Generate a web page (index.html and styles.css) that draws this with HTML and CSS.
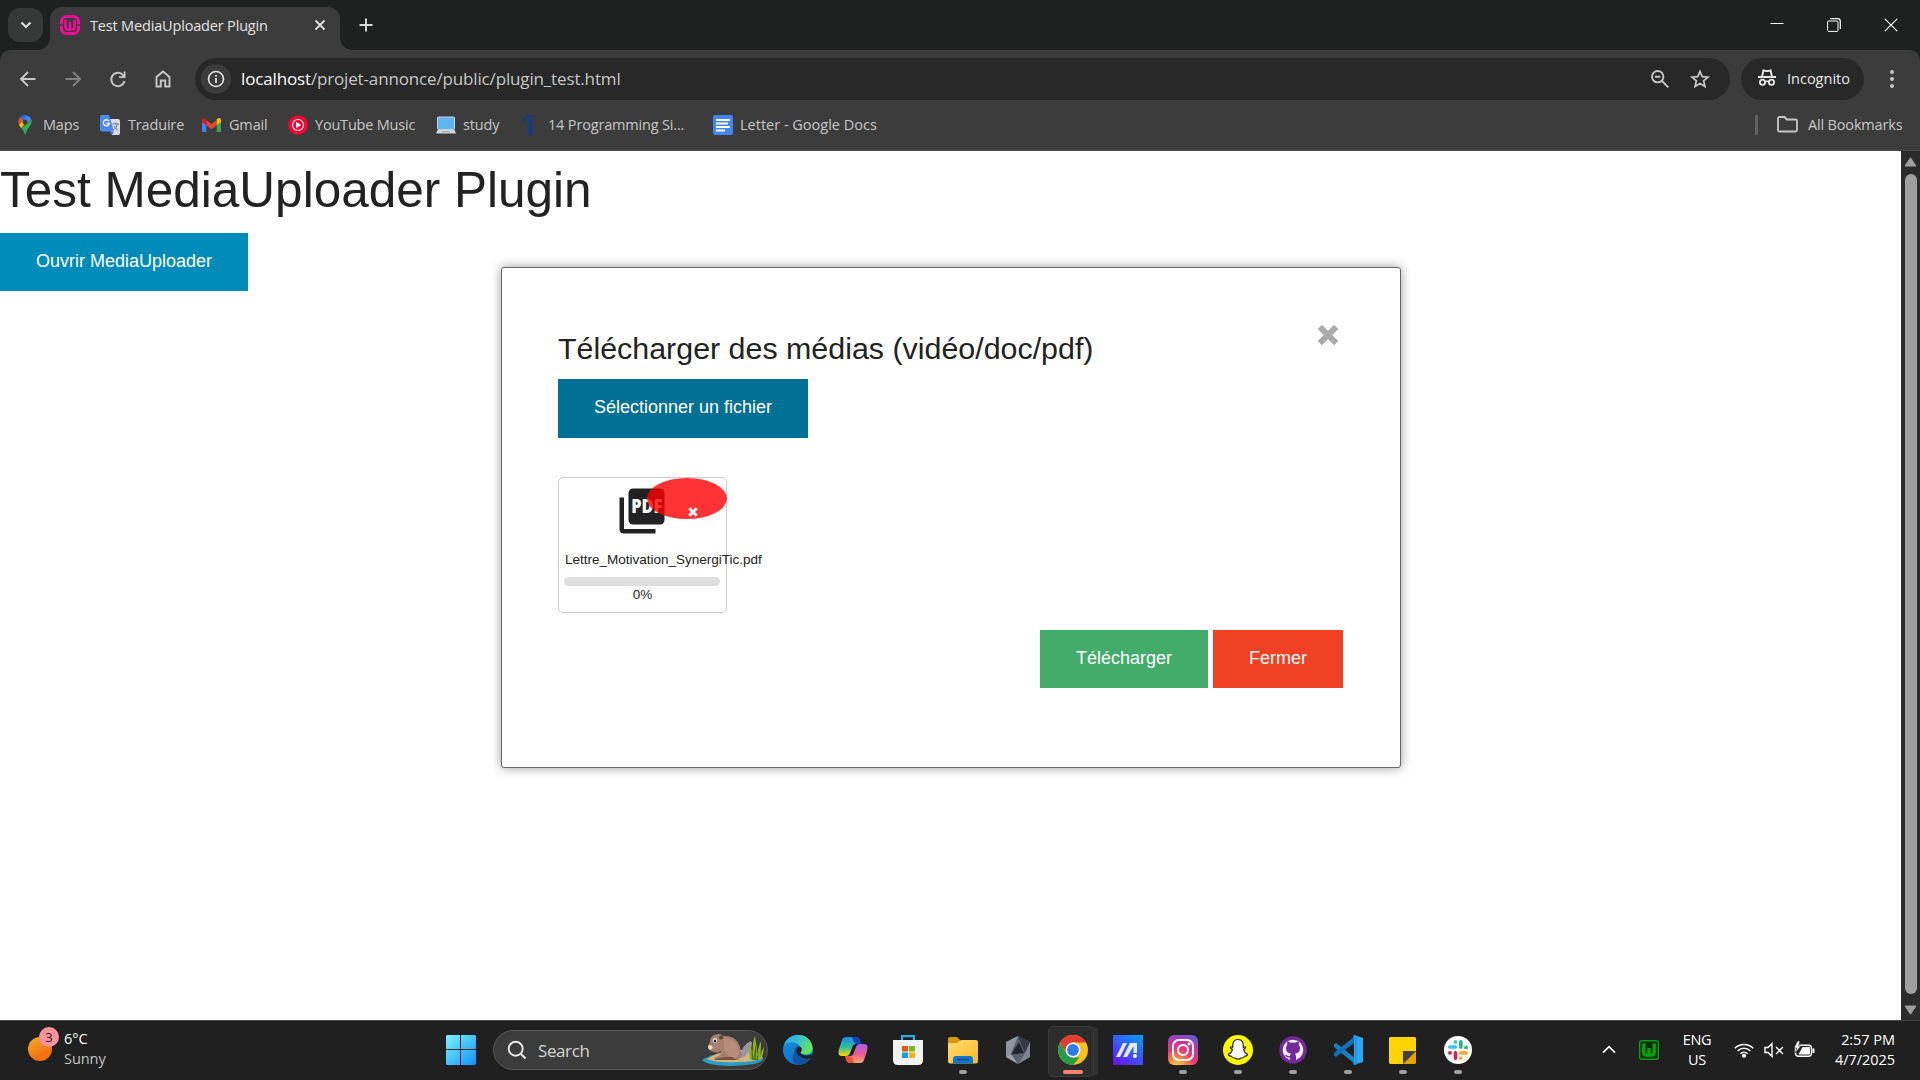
FILE: index.html
```html
<!DOCTYPE html>
<html lang="fr">
<head>
<meta charset="utf-8">
<title>Test MediaUploader Plugin</title>
<link rel="stylesheet" href="styles.css">
</head>
<body>
<div class="screen">
  <header class="tabstrip">
    <button class="tab-search"><svg width="12" height="12" viewBox="0 0 12 12"><path d="M1.5 3.5 6 8l4.500-4.500" fill="none" stroke="#e3e3e3" stroke-width="2"/></svg></button>
    <div class="tab">
      <svg class="favicon" width="20" height="20" viewBox="0 0 20 20"><rect x="1.500" y="1.500" width="17" height="17" rx="5" fill="none" stroke="#f70a9b" stroke-width="3"/><path d="M5.500 5v6.500q0 3 2.300 3h4.400q2.300 0 2.300-3V5M10 7v7" fill="none" stroke="#f70a9b" stroke-width="2.400"/><path d="M0 10h3M17 10h3" stroke="#3c3c3c" stroke-width="1.500"/></svg>
      <span class="tab-title">Test MediaUploader Plugin</span>
      <svg class="tab-close" width="12" height="12" viewBox="0 0 12 12"><path d="m1.500 1.500 9 9m0-9-9 9" stroke="#e3e3e3" stroke-width="1.800"/></svg>
    </div>
    <svg class="new-tab" width="14" height="14" viewBox="0 0 14 14"><path d="M7 .5v13M.5 7h13" stroke="#dcdcdc" stroke-width="1.900"/></svg>
    <div class="window-controls">
      <svg width="14" height="14" viewBox="0 0 14 14"><path d="M.5 5.500h13" stroke="#fff"/></svg>
      <svg width="14" height="14" viewBox="0 0 14 14" fill="none" stroke="#fff"><rect x=".6" y="3" width="10.400" height="10.400" rx="1"/><path d="M3 .7h7.500q2.800 0 2.800 2.800V11" stroke-width="1.200"/></svg>
      <svg width="14" height="14" viewBox="0 0 14 14"><path d="m.8.8 12.400 12.400m0-12.400L.8 13.200" stroke="#fff" stroke-width="1.200"/></svg>
    </div>
  </header>

  <section class="toolbar">
    <div class="nav-row">
      <div class="nav-icons">
        <svg width="20" height="20" viewBox="0 0 20 20"><path d="M17.500 10H3.500M10 3l-7 7 7 7" class="line"/></svg>
        <svg class="dim" width="20" height="20" viewBox="0 0 20 20"><path d="M2.500 10h14M10 3l7 7-7 7" class="line"/></svg>
        <svg width="20" height="20" viewBox="0 0 20 20"><path d="M16 7.500A6.700 6.700 0 1 0 16.500 12" class="line"/><path d="M17.500 2.500V9H11V7.200h4.700V2.500z" fill="#c7c7c7"/></svg>
        <svg width="20" height="20" viewBox="0 0 20 20"><path d="M3.500 17.500V8L10 2.500 16.500 8v9.500h-4.300v-6H7.800v6z" class="line"/></svg>
      </div>
      <div class="omnibox">
        <span class="site-info"><svg width="18" height="18" viewBox="0 0 18 18"><circle cx="9" cy="9" r="7.500" fill="none" stroke="#e3e3e3" stroke-width="1.600"/><path d="M9 8v5M9 5v1.700" stroke="#e3e3e3" stroke-width="1.800"/></svg></span>
        <span class="url"><b>localhost</b>/projet-annonce/public/plugin_test.html</span>
        <svg class="zoom-icon" width="20" height="20" viewBox="0 0 20 20" fill="none" stroke="#c7c7c7" stroke-width="1.900"><circle cx="7.700" cy="7.700" r="5.700"/><path d="m12 12 6.300 6.300M5 7.700h5.400"/></svg>
        <svg class="star-icon" width="20" height="20" viewBox="0 0 24 24"><path d="m12 3 2.700 6.200 6.800.6-5.100 4.500 1.500 6.600L12 17.400l-5.900 3.500 1.500-6.600-5.100-4.500 6.800-.6z" fill="none" stroke="#c7c7c7" stroke-width="2.100"/></svg>
      </div>
      <div class="incognito">
        <svg width="20" height="20" viewBox="0 0 20 20"><path d="M1 9h18M5 8.500 6.500 2.300q3.500 1.300 7 0L15 8.500" fill="none" stroke="#e8e8e8" stroke-width="1.900"/><circle cx="5.500" cy="14.300" r="2.600" fill="none" stroke="#e8e8e8" stroke-width="1.800"/><circle cx="14.500" cy="14.300" r="2.600" fill="none" stroke="#e8e8e8" stroke-width="1.800"/><path d="M8 13.800q2-1 4 0" fill="none" stroke="#e8e8e8" stroke-width="1.600"/></svg>
        <span>Incognito</span>
      </div>
      <svg class="kebab" width="6" height="20" viewBox="0 0 6 20" fill="#c7c7c7"><circle cx="3" cy="3" r="2"/><circle cx="3" cy="10" r="2"/><circle cx="3" cy="17" r="2"/></svg>
    </div>
    <nav class="bookmarks">
      <a class="bm bm-maps"><svg width="14" height="20" viewBox="0 0 14 20"><path d="M2 2.200A7 7 0 0 1 9 .4L4.500 6z" fill="#1a73e8"/><path d="M9 .4A7 7 0 0 1 13.500 4.700L9 8.800 5 5z" fill="#4285f4"/><path d="M2 2.200 5.500 5 1.300 10.200A7 7 0 0 1 2 2.200z" fill="#ea4335"/><path d="M9.500 5.500 3.300 13.200 1 10l4-5z" fill="#fbbc04"/><path d="M13.500 4.700C15 10 9 13 8 18q-.8 3-1.800 0c-.5-2-1.800-3.700-2.900-4.800z" fill="#34a853"/><circle cx="7" cy="7" r="2.500" fill="#3c3c3c"/></svg><span>Maps</span></a>
      <a class="bm bm-trad"><svg width="20" height="20" viewBox="0 0 20 20"><path d="M8 4h10q2 0 2 2v12q0 2-2 2h-6z" fill="#d9dce0"/><path d="m9 17 3 3 1.500-3z" fill="#3367d6"/><path d="M2 0h7l5 16.500H2q-2 0-2-2V2q0-2 2-2z" fill="#4c8bf5"/><path d="M9 6.300A3 3 0 1 0 9.300 8.500H6.500" fill="none" stroke="#fff" stroke-width="1.300"/><path d="M12.500 9H19M15.700 7.500V9M17.500 9q-1 4-4 6M14 11q1 2.500 4 4.200" fill="none" stroke="#6b7280"/></svg><span>Traduire</span></a>
      <a class="bm bm-gmail"><svg width="19" height="14" viewBox="0 0 19 14"><path d="M0 3v9.500Q0 14 1.500 14H4.300V5z" fill="#4285f4"/><path d="M19 3v9.500q0 1.500-1.500 1.500h-2.800V5z" fill="#34a853"/><path d="M4.300 2v5.300l5.200 4 5.200-4V2L9.500 6z" fill="#ea4335"/><path d="M0 2Q.5-.8 3 .3L4.300 1.500v5.800L0 4z" fill="#c5221f"/><path d="M19 2q-.5-2.800-3-1.700l-1.300 1.200v5.800L19 4z" fill="#fbbc04"/></svg><span>Gmail</span></a>
      <a class="bm bm-yt"><svg width="20" height="20" viewBox="0 0 20 20"><circle cx="10" cy="10" r="9.800" fill="#f03"/><circle cx="10" cy="10" r="5.500" fill="none" stroke="#fff" stroke-width="1.200"/><path d="m8 6.800 5.200 3.200L8 13.200z" fill="#fff"/></svg><span>YouTube Music</span></a>
      <a class="bm bm-study"><svg width="20" height="18" viewBox="0 0 20 18"><rect x="1.500" y="1" width="17" height="12.500" rx="1" fill="#5fb4f2" stroke="#c4d3dc"/><path d="M1.500 14h17l1.500 3.500H0z" fill="#cfd4d8"/><path d="M6 15.800h8" stroke="#9aa2a8"/></svg><span>study</span></a>
      <a class="bm bm-indeed"><svg width="16" height="20" viewBox="0 0 16 20"><circle cx="8.500" cy="6.200" r="2.400" fill="#0a3d9c"/><path d="M8.200 10.500v8" stroke="#0a3d9c" stroke-width="3.400" stroke-linecap="round"/><path d="M1 8C2 2 7-1 13 2" fill="none" stroke="#0a3d9c" stroke-width="1.300"/></svg><span>14 Programming Si...</span></a>
      <a class="bm bm-docs"><svg width="20" height="20" viewBox="0 0 20 20"><rect width="20" height="20" rx="2" fill="#4285f4"/><path d="M3 5h14M3 8.500h12M3 12h14M3 15.500h9" stroke="#fff" stroke-width="2"/></svg><span>Letter - Google Docs</span></a>
      <i class="bm-sep"></i>
      <a class="bm bm-all"><svg width="21" height="17" viewBox="0 0 21 17"><path d="M1 2.500Q1 1 2.500 1H7.500L10 3.500h8.500Q20 3.500 20 5v9q0 1.500-1.500 1.500h-16Q1 15.500 1 14z" fill="none" stroke="#c7c7c7" stroke-width="1.800"/></svg><span>All Bookmarks</span></a>
    </nav>
  </section>

  <div class="viewport">
    <main class="page">
      <h1>Test MediaUploader Plugin</h1>
      <button class="button">Ouvrir MediaUploader</button>
      <section class="modal">
        <svg class="modal-close" width="22" height="22" viewBox="0 0 22 22"><path d="m2.800 2.800 16.400 16.400m0-16.400L2.800 19.200" stroke="#aaa" stroke-width="6"/></svg>
        <h3>Télécharger des médias (vidéo/doc/pdf)</h3>
        <button class="button dark">Sélectionner un fichier</button>
        <div class="file">
          <svg class="pdf" width="54" height="54" viewBox="0 0 24 24"><path d="M4 6H2v14q0 2 2 2h14v-2H4z" fill="#222"/><rect x="6" y="2" width="16" height="16" rx="2" fill="#222"/><text x="7.200" y="12.900" textLength="13.800" lengthAdjust="spacingAndGlyphs" class="pdf-text">PDF</text></svg>
          <span class="remove"><svg width="10" height="10" viewBox="0 0 10 10"><path d="m1.300 1.300 7.400 7.400m0-7.400L1.300 8.700" stroke="#fff" stroke-width="2.900"/></svg></span>
          <p class="file-name">Lettre_Motivation_SynergiTic.pdf</p>
          <div class="progress"></div>
          <p class="percent">0%</p>
        </div>
        <div class="actions">
          <button class="button success">Télécharger</button>
          <button class="button alert">Fermer</button>
        </div>
      </section>
    </main>
    <aside class="scrollbar">
      <svg width="13" height="10" viewBox="0 0 13 10"><path d="M6.500.8 12 9H1z" fill="#9f9f9f" stroke="#9f9f9f" stroke-linejoin="round"/></svg>
      <i></i>
      <svg width="13" height="10" viewBox="0 0 13 10"><path d="M6.500 9.200 12 1H1z" fill="#9f9f9f" stroke="#9f9f9f" stroke-linejoin="round"/></svg>
    </aside>
  </div>

  <footer class="taskbar">
    <div class="weather">
      <div class="sun"><span>3</span></div>
      <div class="weather-text"><b>6°C</b><span>Sunny</span></div>
    </div>
    <div class="center">
      <svg class="start" width="30" height="30" viewBox="0 0 30 30"><defs><linearGradient id="win" x2="1" y2="1"><stop stop-color="#7df3ff"/><stop offset="1" stop-color="#0d93fb"/></linearGradient></defs><path d="M1 0h13v14H0V1zM15 0h14l1 1v13H15zM0 15h14v15H1l-1-1zM15 15h15v14l-1 1H15z" fill="url(#win)"/></svg>
      <div class="search">
        <svg width="20" height="20" viewBox="0 0 20 20" fill="none" stroke="#e6e6e6"><circle cx="8.700" cy="8.700" r="7" stroke-width="1.900"/><path d="m13.800 13.800 4.700 4.700" stroke-width="2.300"/></svg>
        <span>Search</span>
        <svg class="beaver" width="62" height="32" viewBox="0 0 62 32"><path d="M0 26q8-6 22-6l38 3q4 4-8 7-26 4-44 0-7-2-8-4z" fill="#2a9cc4"/><path d="M5 25q12-9 35-9 16 1 21 8-8 4-26 4-20 1-30-3z" fill="#d3b877"/><path d="M38 24q2-14 11-17 3 4-3 12-3 5-8 5z" fill="#9d92ae"/><path d="M8 8q0-8 9-8 3 0 4 2 16-1 18 16 1 6-3 8H13q-3-2 3-4 4-2 3-5-3 3-7 1-7-2-6-6z" fill="#a77f6c"/><path d="M22 4q14 1 15 14 0 4-3 6-9-1-12-8z" fill="#b68d7b"/><path d="M12 26q5-3 18-3l5 3z" fill="#76513f"/><circle cx="13" cy="6.500" r="2.300" fill="#fff"/><circle cx="13" cy="7" r="1.400" fill="#21243c"/><circle cx="19" cy="3.500" r="2" fill="#5d4034"/><path d="M7 11q3 0 4 3l-3 2q-3-2-1-5z" fill="#eadad0"/><path d="M48 26Q46 12 48 9q2 8 3 14Q50 7 53 2q2 10 2 20 1-9 4-15 0 11-1 17 1-7 4-11 0 8-4 13z" fill="#8daf22"/><path d="M50 26q-1-6 0-12l2 12q0-10 2-15v15l3-9-1 9z" fill="#4f7a17"/></svg>
      </div>
      <div class="apps">
        <span class="app"><svg width="30" height="30" viewBox="0 0 30 30"><defs><linearGradient id="e1" x2="1" y2=".4"><stop stop-color="#25a8e8"/><stop offset=".55" stop-color="#35c3cf"/><stop offset="1" stop-color="#62e456"/></linearGradient><linearGradient id="e2" x2=".3" y2="1"><stop stop-color="#1c92dc"/><stop offset="1" stop-color="#0a6fd0"/></linearGradient></defs><circle cx="15" cy="15" r="15" fill="url(#e2)"/><path d="M11 18c0-4 2-7 5-7 3 1 4 4 1 8q4 3 11 1-3 8-11 10C10 30 8 23 11 18z" fill="#1254a0"/><path d="M1 10C5-3 25-4 29 10c3 8-4 11-10 9-3-1 1-3-1-6C15 6 5 6 1 10z" fill="url(#e1)"/><path d="M15 12c4-1 5 3 2 6 3 3 8 3 13 1v4l-3 .5c-4 1-9 0-12-3-2-3-2-7 0-8.500z" fill="#202020"/><path d="M17 21q5 4 11 2-3 5-8 6-5-3-5-9z" fill="#14519a"/></svg></span>
        <span class="app"><svg width="30" height="28" viewBox="0 0 30 28"><defs><linearGradient id="c1" x2="0" y2="1"><stop stop-color="#168cee"/><stop offset=".55" stop-color="#32bf9a"/><stop offset="1" stop-color="#ffd800"/></linearGradient><linearGradient id="c2" x2="0" y2="1"><stop stop-color="#a55cf0"/><stop offset=".55" stop-color="#f2598d"/><stop offset="1" stop-color="#ffab65"/></linearGradient></defs><path d="M8 1h10q3 0 4 4l1 3h-5q-3 0-4 4l-2 5q-1 3-4 3H4q-5 0-3-7L4 4q1-3 4-3z" fill="url(#c1)"/><path d="M14 1h4q3 0 4 4l1 3h-5l-2-2z" fill="#1642bd"/><path d="M22 27H12q-3 0-4-4l-1-3h5q3 0 4-4l2-5q1-3 4-3h4q5 0 3 7l-3 9q-1 3-4 3z" fill="url(#c2)"/><path d="M16 27h-4q-3 0-4-4l-1-3h5l3 3z" fill="#ee5036"/></svg></span>
        <span class="app"><svg width="30" height="30" viewBox="0 0 30 30"><path d="M9 6V1.200h12V6" fill="none" stroke="#22afe9" stroke-width="2.200"/><path d="M0 5h30v20q0 5-5 5H5q-5 0-5-5z" fill="#f3f3f3"/><path fill="#f1511b" d="M9 11h6v5.500H9z"/><path fill="#80b918" d="M16 11h6v5.500h-6z"/><path fill="#0da4ee" d="M9 17.500h6V23H9z"/><path fill="#fbb515" d="M16 17.500h6V23h-6z"/></svg></span>
        <span class="app run"><svg width="30" height="27" viewBox="0 0 30 27"><defs><linearGradient id="f1" x2="1" y2="1"><stop stop-color="#ffdc75"/><stop offset="1" stop-color="#f8b81c"/></linearGradient></defs><path d="M0 2Q0 0 2 0h7l3 3v6H0z" fill="#d99a05"/><path d="M0 6h9l4-3h15q2 0 2 2v19.500q0 2-2 2H2q-2 0-2-2z" fill="url(#f1)"/><path d="M5 26.500V22q0-3 3-3h14q3 0 3 3v4.500z" fill="#1076cf"/><path d="M9 22.500h12" stroke="#0b3f80" stroke-width="1.300"/></svg></span>
        <span class="app"><svg width="28" height="30" viewBox="0 0 28 30"><path d="m14 1 12 6v15l-12 7L2 22V7z" fill="#59616c"/><path d="M14 1 2 7v15l5-3z" fill="#8b949f"/><path d="m14 1 12 6-5 11z" fill="#343b45"/><path d="m21 18 5-11v15l-12 7z" fill="#7d8590"/><path d="m2 22 5-3 7 10z" fill="#9aa2ad"/><path d="m15 7-8 12.500 13-1.500z" fill="#20252b"/></svg></span>
        <span class="app active"><svg width="30" height="30" viewBox="0 0 30 30"><circle cx="15" cy="15" r="15" fill="#fbc117"/><path d="M2 7.500A15 15 0 0 1 28 7.500H15L8.500 19z" fill="#e33b2e"/><path d="M2 7.500 8.500 18.800 15 22.500h6.500L15 30A15 15 0 0 1 2 7.500z" fill="#269b4b"/><circle cx="15" cy="15" r="7.500" fill="#fff"/><circle cx="15" cy="15" r="5.900" fill="#307de9"/></svg></span>
        <span class="app"><svg width="30" height="30" viewBox="0 0 30 30"><defs><linearGradient id="m1" x1=".2" y1="1" x2=".9" y2="0"><stop stop-color="#6517f4"/><stop offset="1" stop-color="#089bff"/></linearGradient></defs><path fill="url(#m1)" d="M0 0h30v30H0z"/><path d="m3 22 7-14h4L7 22zM10 22l7-14h7v10h-3.500v-7L14 22z" fill="#e4e9ff"/><circle cx="22" cy="21" r="2" fill="#fff"/></svg></span>
        <span class="app run"><svg width="30" height="30" viewBox="0 0 30 30"><defs><radialGradient id="i1" cx=".3" cy="1.050" r="1.150"><stop stop-color="#ffd75e"/><stop offset=".25" stop-color="#fc8b3d"/><stop offset=".5" stop-color="#e83a70"/><stop offset=".75" stop-color="#bd37ac"/><stop offset="1" stop-color="#615bd0"/></radialGradient></defs><rect width="30" height="30" rx="6" fill="url(#i1)"/><rect x="5" y="5" width="20" height="20" rx="6" fill="none" stroke="#fff" stroke-width="2"/><circle cx="15" cy="15" r="5" fill="none" stroke="#fff" stroke-width="2"/><circle cx="21" cy="9" r="1.400" fill="#fff"/></svg></span>
        <span class="app run"><svg width="30" height="30" viewBox="0 0 30 30"><circle cx="15" cy="15" r="15" fill="#fffc00"/><path d="M15 4.500c4.500 0 5.500 3 5.300 8l2-.7c1 .8-.2 1.800-1.700 2.500.5 3 2.200 4.300 4 5q-.3 1.700-3.200 2c-.2 2-2 1-3.300 1.700q-3 2.300-6.200 0c-1.300-.7-3.100.3-3.300-1.700q-2.900-.3-3.200-2c1.800-.7 3.500-2 4-5-1.500-.7-2.700-1.700-1.700-2.500l2 .7c-.2-5 .8-8 5.300-8z" fill="#fff" stroke="#222" stroke-width="1.100"/></svg></span>
        <span class="app run"><svg width="28" height="28" viewBox="0 0 28 28"><circle cx="14" cy="14" r="13.700" fill="#73299a"/><circle cx="14" cy="14" r="10.300" fill="#f4eff7"/><path d="M11 25v-3.500q-3.500.5-5-2.500l1.300-.2Q9 21 11 19.800q.1-1 1-2c-3.500-.5-5-2.500-5-5.500q0-2.200 1.200-3.500-.5-1.700.2-3.300 1.700 0 3.200 1.200 2.400-.6 4.800 0 1.500-1.200 3.200-1.200.7 1.600.2 3.300 1.200 1.300 1.200 3.500c0 3-1.500 5-5 5.500q1 1 1 3V25z" fill="#73299a"/></svg></span>
        <span class="app run"><svg width="30" height="30" viewBox="0 0 30 30"><path d="M1 9.500 3 8l19 15v6L1 12z" fill="#1683c9"/><path d="M1 20.500 3 22 22 7V1L1 18z" fill="#0d72bb"/><path d="m21 0 9 3v24l-9 3z" fill="#2aa7f2"/><path d="m21 0 3 1v28l-3 1-1-2 2-1V4l-2-2z" fill="#2395df"/></svg></span>
        <span class="app run"><svg width="27" height="27" viewBox="0 0 27 27"><path d="M1 0h25l1 1v13L14 27H1l-1-1V1z" fill="#ffd400"/><path d="M27 14v12l-1 1H14z" fill="#e7a300"/><path d="M14 14h13L14 27z" fill="#414141"/></svg></span>
        <span class="app run"><svg width="28" height="28" viewBox="0 0 28 28"><circle cx="14" cy="14" r="14" fill="#fff"/><g stroke-width="3.700" stroke-linecap="round"><path d="M11.500 5.800v.1M5.800 11h5.700" stroke="#36c5f0"/><path d="M16.800 5.800V11M22 11.400h.1" stroke="#2eb67d"/><path d="M16.800 22.100V22M16.800 16.900h5.300" stroke="#ecb22e"/><path d="M11.500 22.100v-5.200M5.900 16.900h.1" stroke="#e01e5a"/></g></svg></span>
      </div>
    </div>
    <div class="tray">
      <svg class="chev" width="14" height="9" viewBox="0 0 14 9"><path d="m1 7.700 6-6 6 6" fill="none" stroke="#fff" stroke-width="1.800"/></svg>
      <svg class="wamp" width="20" height="20" viewBox="0 0 20 20"><rect x=".7" y=".7" width="18.600" height="18.600" rx="2" fill="#052f05" stroke="#0b9d0b" stroke-width="1.400"/><path d="M4.800 3.500v8.500q0 3 2.500 3h5.400q2.500 0 2.500-3V3.500M10 8v6" fill="none" stroke="#08a008" stroke-width="3.400"/></svg>
      <div class="lang"><span>ENG</span><span>US</span></div>
      <svg class="wifi" width="20" height="16" viewBox="0 0 20 16" fill="none" stroke="#fff" stroke-width="1.500"><path d="M.8 6.200a13 13 0 0 1 18.400 0M3.600 9a9 9 0 0 1 12.800 0M6.400 11.700a5.100 5.100 0 0 1 7.200 0"/><circle cx="10" cy="13.700" r="1.300" fill="#fff"/></svg>
      <svg class="mute" width="20" height="16" viewBox="0 0 20 16" fill="none" stroke="#fff" stroke-width="1.400"><path d="M1 5.500v5h3l4 3.800V1.700L4 5.500zM12 5l7 7m0-7-7 7"/></svg>
      <svg class="batt" width="21" height="17" viewBox="0 0 21 17"><rect x="1.500" y="4.200" width="16" height="11" rx="3" fill="none" stroke="#fff" stroke-width="1.400"/><path d="M8.500 6H15q1 0 1 1v5.500q0 1-1 1H4.500z" fill="#fff"/><path d="M19.500 7.500v4.500" stroke="#fff" stroke-width="2"/><path d="M3.500 0 0 7h2.500L1.500 11.500 7 5H4.500L6 0z" fill="#fff" stroke="#202020" stroke-width=".6"/></svg>
      <div class="clock"><span>2:57 PM</span><span>4/7/2025</span></div>
    </div>
  </footer>
</div>
</body>
</html>
```
FILE: styles.css
```css
* { box-sizing: border-box; }
body { margin: 0; font-family: "Open Sans", "Noto Sans", sans-serif; }
svg { display: block; flex: none; }
b { font-weight: 400; }
p { margin: 0; }
button { border: 0; margin: 0; padding: 0; font: inherit; }

.screen { width: 1920px; height: 1080px; display: flex; flex-direction: column; overflow: hidden; background: #1f2120; }

/* Tab strip */
.tabstrip { height: 50px; flex: none; display: flex; padding: 7px 13px 0 8px; background: #1f2120; }
.tab-search { width: 35px; height: 34px; margin-top: 1px; border-radius: 12px; background: #373938; display: flex; align-items: center; justify-content: center; }
.tab { position: relative; width: 290px; height: 43px; margin-left: 7px; padding: 0 14px 7px 10px; border-radius: 12px 12px 0 0; background: #3c3c3c; display: flex; align-items: center; }
.tab::before, .tab::after { content: ""; position: absolute; bottom: 0; width: 12px; height: 12px; }
.tab::before { left: -12px; background: radial-gradient(circle at 0 0, transparent 11.5px, #3c3c3c 12px); }
.tab::after { right: -12px; background: radial-gradient(circle at 100% 0, transparent 11.5px, #3c3c3c 12px); }
.tab-title { margin-left: 10px; color: #e3e3e3; font-size: 14.5px; letter-spacing: -.17px; white-space: nowrap; }
.tab-close { margin-left: auto; }
.new-tab { margin: 11px 0 0 19px; }
.window-controls { display: flex; gap: 43px; margin: 11px 0 0 auto; padding-right: 9px; }

/* Toolbar */
.toolbar { height: 101px; flex: none; background: #3c3c3c; border-radius: 10px 10px 0 0; border-bottom: 1px solid #4c4c4c; }
.nav-row { display: flex; align-items: center; height: 58px; padding: 0 25px 0 17px; }
.nav-icons { display: flex; gap: 25px; width: 178px; padding: 0 0 1px 1px; }
.line { fill: none; stroke: #c7c7c7; stroke-width: 1.9; }
.dim { opacity: .5; }
.omnibox { display: flex; align-items: center; width: 1535px; height: 42px; border-radius: 21px; background: #282828; padding: 0 20px 0 6px; }
.site-info { width: 30px; height: 30px; border-radius: 50%; background: #3c3c3c; display: flex; align-items: center; justify-content: center; }
.url { margin-left: 10px; padding-bottom: 1px; font-size: 17px; letter-spacing: -.15px; color: #c7c7c7; white-space: nowrap; }
.url b { color: #fff; }
.zoom-icon { margin-left: auto; }
.star-icon { margin-left: 20px; }
.incognito { display: flex; align-items: center; gap: 10px; width: 123px; height: 42px; margin-left: 11px; padding: 0 0 2px 16px; border-radius: 21px; background: #282828; color: #e8e8e8; font-size: 14.5px; letter-spacing: 0; }
.kebab { margin-left: auto; }

.bookmarks { display: flex; align-items: center; height: 33px; padding: 0 18px; color: #c7c7c7; font-size: 14.5px; letter-spacing: -.17px; white-space: nowrap; }
.bm { display: flex; align-items: center; gap: 8px; flex: none; }
.bm span { padding-bottom: 1px; }
.bm-maps { width: 82px; gap: 11px; }
.bm-trad { width: 102px; }
.bm-gmail { width: 86px; }
.bm-yt { width: 148px; gap: 7px; letter-spacing: -.2px; }
.bm-study { width: 86px; gap: 7px; }
.bm-indeed { width: 191px; gap: 10px; }
.bm-docs { width: 170px; gap: 7px; letter-spacing: 0; }
.bm-sep { width: 3px; height: 20px; margin-left: auto; border-radius: 2px; background: #626262; }
.bm-all { margin-left: 19px; gap: 10px; width: 125px; }

/* Web page */
.viewport { height: 869px; flex: none; display: flex; background: #fff; }
.page { position: relative; flex: 1; font-family: "Liberation Sans", Arial, sans-serif; color: #222; }
h1, h3 { font-weight: 400; line-height: 1.4; margin: 0; white-space: nowrap; }
h1 { font-size: 49.5px; padding-top: 4px; margin-bottom: 9px; }
h3 { font-size: 30.4px; }
.button { display: block; height: 58px; padding: 0 36px 2px; background: #008cba; color: #fff; font-size: 18px; white-space: nowrap; }
.button.dark { height: 59px; margin-top: 9px; background: #007095; }
.button.success { background: #43ac6a; }
.button.alert { background: #f04124; }
.modal { position: absolute; left: 501px; top: 116px; width: 900px; height: 501px; padding: 59px 57px 0 56px; border: 1px solid #666; border-radius: 3px; background: #fff; box-shadow: 0 0 11px rgba(0, 0, 0, .4); }
.modal-close { position: absolute; left: 815px; top: 56px; }
.file { position: relative; width: 169px; height: 136px; margin-top: 39px; padding: 6px; border: 1px solid #ccc; border-radius: 5px; font-size: 13.5px; }
.pdf { margin: 0 0 0 50px; }
.pdf-text { font: 900 8.3px "Noto Sans", "Open Sans", sans-serif; fill: #fff; }
.remove { position: absolute; right: -1px; top: 0; width: 80px; height: 41px; padding: 29px 0 0 41px; border-radius: 50%; background: rgba(255, 0, 0, .8); }
.file-name { margin-top: 13px; line-height: 18px; white-space: nowrap; }
.progress { height: 9px; margin: 8px 0 0 -1px; border-radius: 5px; background: #ddd; }
.percent { line-height: 18px; text-align: center; }
.actions { display: flex; justify-content: flex-end; gap: 5px; margin-top: 17px; }
.actions .button { padding-bottom: 1px; }

.scrollbar { width: 19px; display: flex; flex-direction: column; align-items: center; padding-top: 6px; background: #2c2c2c; }
.scrollbar i { width: 12px; height: 820px; margin: 7px 0 11px; border-radius: 6px; background: #9f9f9f; }

/* Taskbar */
.taskbar { height: 60px; flex: none; display: flex; background: #202020; border-top: 1px solid #454545; color: #fff; font-size: 14.5px; }
.weather { display: flex; width: 447px; padding: 8px 0 0 28px; }
.sun { position: relative; width: 24px; height: 24px; margin-top: 8px; border-radius: 50%; background: linear-gradient(150deg, #eeb32a, #f57010 70%); }
.sun span { position: absolute; left: 11px; top: -10px; width: 20px; height: 20px; border-radius: 50%; background: #fb929c; color: #202020; font-size: 13px; line-height: 20px; text-align: center; }
.weather-text { display: flex; flex-direction: column; margin-left: 12px; line-height: 20px; letter-spacing: -.05px; }
.weather-text span { color: #c4c4c4; }
.center { display: flex; align-items: center; padding-bottom: 1px; }
.start { margin: 0 17px 0 -1px; }
.search { display: flex; align-items: center; width: 275px; height: 40px; padding: 0 3px 0 13px; border-radius: 20px; border: 1px solid #565656; background: #3c3c3c; color: #d5d5d5; font-size: 17px; }
.search span { margin-left: 11px; letter-spacing: -.4px; }
.beaver { margin-left: auto; }
.apps { display: flex; margin-left: 2px; }
.app { position: relative; width: 55px; height: 58px; display: flex; align-items: center; justify-content: center; }
.run::after, .active::after { content: ""; position: absolute; bottom: 5px; left: 24px; width: 8px; height: 4px; border-radius: 2px; background: #a0a0a0; }
.active::before { content: ""; position: absolute; left: 3px; top: 5px; width: 44px; height: 49px; border-radius: 5px; border: 1px solid #393939; background: #2d2d2d; box-shadow: 5px 0 0 -1px #303030; }
.active svg { position: relative; }
.active::after { left: 18px; width: 20px; background: #f5826a; }
.tray { display: flex; align-items: center; margin-left: auto; padding: 0 25px 2px 0; }
.wamp { margin-left: 23px; }
.lang, .clock { display: flex; flex-direction: column; line-height: 20px; }
.lang { width: 40px; margin-left: 18px; text-align: center; letter-spacing: -.3px; }
.wifi { margin-left: 17px; }
.mute { margin-left: 10px; }
.batt { margin-left: 10px; }
.clock { width: 66px; margin-left: 14px; text-align: right; letter-spacing: -.05px; }
```
